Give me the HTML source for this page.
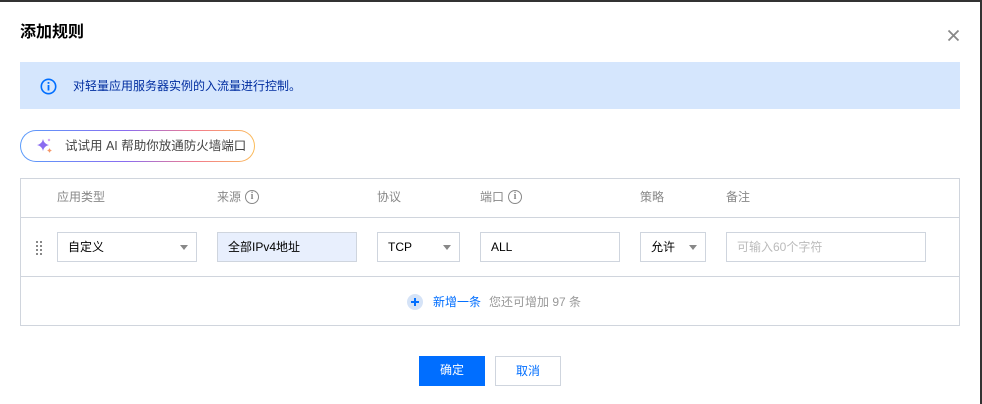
<!DOCTYPE html>
<html><head><meta charset="utf-8"><style>
*{margin:0;padding:0;box-sizing:border-box}
body{width:982px;height:404px;background:#fff;position:relative;overflow:hidden;font-family:"Liberation Sans","Noto Sans CJK SC",sans-serif;font-size:12px;color:#000}
.a{position:absolute}
.top{left:0;top:0;width:982px;height:2px;background:#333}
.right{left:980px;top:0;width:2px;height:404px;background:#333}
.title{left:20px;top:22px;font-size:16px;font-weight:bold;color:#000;line-height:22px}
.banner{left:20px;top:62px;width:940px;height:47px;background:#d5e6fd}
.btext{left:73px;top:78px;color:#002da0;line-height:16px}
.pill{left:20px;top:130px;width:235px;height:32px;border-radius:16px;padding:1px;background:linear-gradient(90deg,#5a9cfb,#8a6cf0 45%,#f27c8c 75%,#fbbd5a)}
.pill div{width:100%;height:100%;border-radius:15px;background:#fff;padding-left:44px;line-height:30px;color:#444;font-size:12.5px}
.table{left:20px;top:178px;width:940px;height:148px;border:1px solid #d0d5dd}
.hl{left:20px;width:940px;height:1px;background:#d0d5dd}
.th{top:189px;color:#888;line-height:16px}
.box{top:232px;height:30px;border:1px solid #cfd5de;background:#fff;line-height:28px;padding-left:10px;color:#000}
.arr{position:absolute;right:8px;top:12px;width:0;height:0;border-left:4px solid transparent;border-right:4px solid transparent;border-top:5px solid #888}
.ic{display:inline-block;width:14px;height:14px;border:1.3px solid #888;border-radius:50%;vertical-align:top;margin-top:1px;margin-left:4px;font-size:10px;line-height:11px;text-align:center;color:#888;font-weight:bold;font-family:"Liberation Serif",serif}
.btn{top:356px;height:30px;line-height:28px;text-align:center;width:66px}
</style></head><body>
<div class="a top"></div><div class="a right"></div>
<div class="a title">添加规则</div>
<svg class="a" style="left:947px;top:29px" width="13" height="13" viewBox="0 0 13 13"><path d="M1.5 1.5L11.5 11.5M11.5 1.5L1.5 11.5" stroke="#888" stroke-width="1.8"/></svg>
<div class="a banner"></div>
<svg class="a" style="left:40px;top:78px" width="17" height="17" viewBox="0 0 17 17"><circle cx="8.5" cy="8.5" r="7.2" fill="none" stroke="#006eff" stroke-width="1.6"/><rect x="7.6" y="7" width="1.8" height="5.5" fill="#006eff"/><rect x="7.6" y="4" width="1.8" height="1.8" fill="#006eff"/></svg>
<div class="a btext">对轻量应用服务器实例的入流量进行控制。</div>
<div class="a pill"><div>试试用 AI 帮助你放通防火墙端口</div></div>
<svg class="a" style="left:36px;top:137px" width="18" height="18" viewBox="0 0 18 18"><path d="M7 2Q8 7 13 8Q8 9 7 14Q6 9 1 8Q6 7 7 2Z" fill="#8a6cf0"/><path d="M13.5 11Q14 13 16 13.5Q14 14 13.5 16Q13 14 11 13.5Q13 13 13.5 11Z" fill="#f59a6c"/><path d="M13 1.5Q13.3 2.7 14.5 3Q13.3 3.3 13 4.5Q12.7 3.3 11.5 3Q12.7 2.7 13 1.5Z" fill="#c07cf0"/></svg>
<div class="a table"></div>
<div class="a hl" style="top:217px"></div>
<div class="a hl" style="top:276px"></div>
<div class="a th" style="left:57px">应用类型</div>
<div class="a th" style="left:217px">来源<span class="ic">i</span></div>
<div class="a th" style="left:377px">协议</div>
<div class="a th" style="left:480px">端口<span class="ic">i</span></div>
<div class="a th" style="left:640px">策略</div>
<div class="a th" style="left:726px">备注</div>
<svg class="a" style="left:35px;top:240px" width="8" height="16"><g fill="#888"><rect x="1" y="1" width="2" height="2"/><rect x="5" y="1" width="2" height="2"/><rect x="1" y="5" width="2" height="2"/><rect x="5" y="5" width="2" height="2"/><rect x="1" y="9" width="2" height="2"/><rect x="5" y="9" width="2" height="2"/><rect x="1" y="13" width="2" height="2"/><rect x="5" y="13" width="2" height="2"/></g></svg>
<div class="a box" style="left:57px;width:140px">自定义<span class="arr"></span></div>
<div class="a box" style="left:217px;width:140px;background:#e8effd">全部IPv4地址</div>
<div class="a box" style="left:377px;width:83px">TCP<span class="arr"></span></div>
<div class="a box" style="left:480px;width:140px">ALL</div>
<div class="a box" style="left:640px;width:66px">允许<span class="arr"></span></div>
<div class="a box" style="left:726px;width:200px;color:#bbb">可输入60个字符</div>
<svg class="a" style="left:407px;top:294px" width="16" height="16"><circle cx="8" cy="8" r="8" fill="#d5e3f7"/><path d="M8 4V12M4 8H12" stroke="#006eff" stroke-width="2"/></svg>
<div class="a" style="left:433px;top:294px;line-height:16px;color:#006eff">新增一条<span style="color:#999;margin-left:8px">您还可增加 97 条</span></div>
<div class="a btn" style="left:419px;background:#006eff;color:#fff">确定</div>
<div class="a btn" style="left:495px;width:66px;border:1px solid #cfd5de;color:#006eff">取消</div>
</body></html>
